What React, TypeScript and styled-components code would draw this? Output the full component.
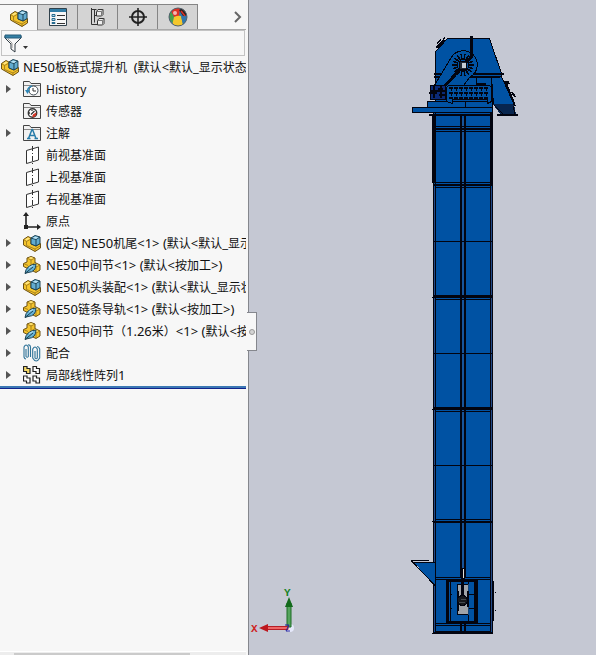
import React from "react";
import styled, { createGlobalStyle } from "styled-components";

const GlobalStyle = createGlobalStyle`
  * { box-sizing: border-box; }
  body {
    margin: 0;
    background: #c5c8d3;
    color: #111;
    font-family: "Noto Sans", "Noto Sans CJK SC", sans-serif;
    font-size: 12px;
  }
  button { font: inherit; color: inherit; padding: 0; border: 0; background: none; }
`;

const Workspace = styled.main`
  display: grid;
  grid-template-columns: 249px minmax(0, 1fr);
  min-height: 100vh;
`;

const Panel = styled.aside`
  position: relative;
  display: flex;
  flex-direction: column;
  min-width: 0;
  padding: 4px 2px 0 0;
  background: #f7f7f7;
  border-right: 1px solid #85878d;
`;

const TabBar = styled.div`
  display: flex;
  align-items: stretch;
  height: 26px;
  border-bottom: 1px solid #a9a9a9;
`;

const Tab = styled.button<{ $active?: boolean }>`
  display: flex;
  align-items: center;
  justify-content: center;
  width: ${(p) => (p.$active ? 38 : 40)}px;
  height: ${(p) => (p.$active ? 26 : 25)}px;
  background: ${(p) => (p.$active ? "#f7f7f7" : "#d4d4d4")};
  border-top: 1px solid #858585;
  border-right: 1px solid #858585;
`;

const MoreTabs = styled.button`
  display: flex;
  align-items: center;
  margin-left: auto;
  padding-right: 4px;
`;

const FilterBar = styled.div`
  display: flex;
  align-items: center;
  height: 26px;
  margin: 0 1px;
  padding-left: 2px;
  border: 1px solid #c3c3c3;
`;

const FilterButton = styled.button`
  display: flex;
  align-items: center;
`;

const FilterInput = styled.input`
  flex: 1;
  min-width: 0;
  border: 0;
  outline: 0;
  background: transparent;
  font: inherit;
`;

const RootRow = styled.div`
  display: flex;
  align-items: center;
  gap: 4px;
  height: 22px;
  padding-left: 1px;
  white-space: nowrap;
  overflow: hidden;
`;

const Tree = styled.ul`
  margin: 0;
  padding: 0;
  list-style: none;
  border-bottom: 2px solid #3c78b4;
  box-shadow: 0 1px 0 #10248c;
`;

const Row = styled.li`
  display: grid;
  grid-template-columns: 18px 18px minmax(0, 1fr);
  column-gap: 5px;
  align-items: center;
  height: 22px;
  overflow: hidden;
`;

const Expander = styled.button`
  display: flex;
  padding-left: 6px;
`;

const Label = styled.span`
  padding-top: 2px;
  overflow: hidden;
  white-space: pre;
  line-height: 20px;
`;

const Latin = styled.span`
  font-size: 13px;
  line-height: 1;
`;

const ScrollTrack = styled.div`
  height: 4px;
  margin-top: auto;
  padding: 1px 56px 0 14px;
  border-top: 1px solid #fff;
  background: #ededed;
`;

const ScrollThumb = styled.div`
  height: 2px;
  background: #cbcbcb;
`;

const Splitter = styled.button`
  position: absolute;
  z-index: 1;
  top: 312px;
  right: -9px;
  display: flex;
  align-items: center;
  justify-content: center;
  width: 10px;
  height: 39px;
  background: #f7f7f7;
  border: 1px solid #85878d;
  border-left: 0;
`;

const Grip = styled.span`
  width: 6px;
  height: 6px;
  border: 1px solid #999;
  border-radius: 50%;
  background: #d4d4d4;
`;

const Viewport = styled.section`
  position: relative;
  min-width: 0;
  background: #c5c8d3;
`;

const Model = styled.svg`
  display: block;
  width: 100%;
`;

const Triad = styled.svg`
  position: absolute;
  left: 1px;
  bottom: 15px;
`;

function AssemblyIcon() {
  return (
    <svg width="18" height="18" viewBox="0 0 18 18" aria-hidden="true">
      <path d="M.5 5.500 5 2.500l3 1.500v6l5 2 4.500-2.500V14L12 17.500.5 11z" fill="#f4c42c" stroke="#6b5014" />
      <path d="m.5 5.500 3 2v4L12 15v2.500M3.500 7.500 8 5M12 15l5-3" fill="none" stroke="#98731a" strokeWidth=".8" />
      <path d="m2 5.500 3-2 2 1-3.500 2z" fill="#ffe681" />
      <path d="m8 4 4-2.500 5 1.500v6.500L13 12l-5-2z" fill="#62acd0" stroke="#1c4254" />
      <path d="m8 4 5 1.500L17 3M13 5.500V12" fill="none" stroke="#1c4254" />
      <path d="m9.500 4 3-1.500 3 1-2.500 1.500z" fill="#b9e2f3" />
    </svg>
  );
}

function PartIcon() {
  return (
    <svg width="18" height="18" viewBox="0 0 18 18" aria-hidden="true">
      <path d="M.5 7.500 4 6V2l4-1.500L12 2v4.500l5 2.500v5l-4 2.500L.5 10.500z" fill="#f4c42c" stroke="#6b5014" />
      <path d="m4 2 4 2 4-2M8 4v5M.5 7.500 5 9.500M12 6.500 9 8.500l4 2.500 4-2M13 11v5" fill="none" stroke="#98731a" strokeWidth=".8" />
      <path d="m5.500 2 2.500-1 2.500 1L8 3zM10.500 8.500 12 7.500l3.500 1.500-2 1z" fill="#ffe681" />
      <path d="M2 17.500Q3 9 13 8q0 8-8 8.500z" fill="#69b3d5" stroke="#1c4254" />
      <path d="m2 17.500 8-6.500" stroke="#1c4254" />
      <path d="m6 11.500 4-2" stroke="#c4e6f3" />
    </svg>
  );
}

function FolderIcon({ kind }: { kind: "history" | "sensor" | "note" }) {
  return (
    <svg width="18" height="18" viewBox="0 0 18 18" aria-hidden="true">
      <path d="M.5 16.500v-15h6l1.500 2h9.500v13z" fill="#f2f2f2" stroke="#444" />
      <path d="M1 5.500h16" stroke="#888" />
      {kind === "history" && (
        <>
          <circle cx="10.500" cy="10.500" r="4.500" fill="#fff" stroke="#3f4b53" />
          <path d="M10 8v3h3" fill="none" stroke="#333" />
          <path d="M2 10h5l-2.500 4z" fill="#2e86b5" />
          <path d="M4.500 11Q5 7 9 6" fill="none" stroke="#2e86b5" strokeWidth="1.500" />
        </>
      )}
      {kind === "sensor" && (
        <>
          <circle cx="9.500" cy="11" r="4.200" fill="#fff" stroke="#333" strokeWidth="1.400" />
          <path d="M13 11a4 4 0 0 1-3 4v-2z" fill="#d63524" stroke="#d63524" />
          <path d="m8 12.500 3.500-3.500M6 11h1M9 8v1" stroke="#333" strokeWidth="1.300" />
        </>
      )}
      {kind === "note" && (
        <path d="m5.500 14.500 3.500-9h.5l3.500 9M7 11.500h5M4 14.500h3.500m4 0H15" fill="none" stroke="#277ca9" strokeWidth="1.500" />
      )}
    </svg>
  );
}

function PlaneIcon() {
  return (
    <svg width="18" height="18" viewBox="0 0 18 18" aria-hidden="true">
      <path d="M3.500 4.500 15.500 1v13l-12 3.500z" fill="#fff" stroke="#333" />
      <path d="M9.500 0v18" stroke="#333" strokeDasharray="5 2 1 2" />
    </svg>
  );
}

function OriginIcon() {
  return (
    <svg width="18" height="18" viewBox="0 0 18 18" aria-hidden="true">
      <path d="M3 14V3M3 15h13" stroke="#222" strokeWidth="1.600" />
      <path d="m0 4 3-4 3 4zM14 12l4 3-4 3z" fill="#222" />
      <rect x="1" y="13" width="4" height="4" fill="#222" />
    </svg>
  );
}

function MateIcon() {
  return (
    <svg width="18" height="18" viewBox="0 0 18 18" aria-hidden="true">
      <g fill="none" stroke="#2f7398" strokeWidth="1.100">
        <path d="M3 5v7.500q1.200 1.500 2.300 0V3Q3-1 1 3v10q.5 2 2 2M7.500 13V3Q7 .5 5 1" />
        <path d="M12 7v7q1.200 1.500 2.300 0V5q-2.300-4-4.600 0v9q3.500 6 7 0V5q-.7-2.500-2.700-2.500" />
      </g>
    </svg>
  );
}

function PatternIcon() {
  const block = "M.5.5h3.500v2h3v5H3.500v-2h-3z";
  return (
    <svg width="18" height="18" viewBox="0 0 18 18" aria-hidden="true">
      <g stroke="#222" strokeWidth="1.200" fill="#fff">
        <path d={block} fill="#f3d868" />
        <path d={block} transform="translate(9.500 0)" />
        <path d={block} transform="translate(0 9.500)" />
        <path d={block} transform="translate(9.500 9.500)" />
      </g>
    </svg>
  );
}

function PropertyIcon() {
  return (
    <svg width="18" height="18" viewBox="0 0 18 18" aria-hidden="true">
      <path d="M.5.5h17v17H.5z" fill="#f7f7f7" stroke="#30414b" />
      <path d="M1 1h16v3H1z" fill="#317da6" />
      <path d="M3 6.500h3v2H3zM3 10.500h3v2H3zM3 14.500h3v1H3z" fill="#b9dce9" stroke="#276b90" />
      <path d="M8 7.500h8M8 11.500h8M8 15.500h8" stroke="#333" />
    </svg>
  );
}

function ConfigIcon() {
  return (
    <svg width="18" height="18" viewBox="0 0 18 18" aria-hidden="true">
      <path d="M2.500 0v16.500H9M2.500 1.500h5M5.500 2v12.500M5.500 7.500H8" fill="none" stroke="#333" />
      <g fill="#eee" stroke="#333">
        <path d="m7.500 3.500 1.500-2h5v5l-1.500 1.500h-5zM8.500 12.500l1.500-2h5v5L13.500 17h-5z" />
        <path d="M7.500 3.500h5V8m0-4.500 1.500-2M8.500 12.500h5V17m0-4.500 1.500-2" fill="none" stroke="#777" />
      </g>
    </svg>
  );
}

function TargetIcon() {
  return (
    <svg width="18" height="18" viewBox="0 0 18 18" aria-hidden="true">
      <circle cx="9" cy="9" r="6" fill="none" stroke="#222" strokeWidth="2" />
      <path d="M9 0v18M0 9h18" stroke="#222" strokeWidth="1.600" />
    </svg>
  );
}

function AppearanceIcon() {
  return (
    <svg width="20" height="20" viewBox="0 0 20 20" aria-hidden="true">
      <circle cx="10" cy="10" r="9" fill="#3178ad" />
      <path d="M3 4.500Q7 0 12 1.200L11 9 6 10z" fill="#df3124" />
      <path d="M1.200 9Q1.500 6 3 4.500L6 10l-1 6Q1 13 1.200 9z" fill="#48a04b" />
      <path d="M6 10q4-2 7-1l2 8.500Q9 21 4.500 16.500z" fill="#f4c72d" />
      <path d="M13 9l5-1.500q2 6-3 10z" fill="#3178ad" />
      <path d="m11 3 3-1.500q4 2 4.500 7L15 9z" fill="#2c2220" />
      <path d="m13 4 4 5" stroke="#df3124" strokeWidth="1.500" />
      <circle cx="7" cy="6" r="2" fill="#fff" opacity=".65" />
      <circle cx="10" cy="10" r="9" fill="none" stroke="#53616b" />
    </svg>
  );
}

function FunnelIcon() {
  return (
    <svg width="26" height="20" viewBox="0 0 26 20" aria-hidden="true">
      <path d="M1 3h16v2l-6 6v8l-4-3v-5L1 5z" fill="#f8f8f8" stroke="#303b42" />
      <path d="M1 2h16v3H1z" fill="#3480a5" stroke="#245a78" />
      <path d="m4 6 4 4v5" fill="none" stroke="#999" />
      <path d="M19 13h5l-2.500 3z" fill="#333" />
    </svg>
  );
}

const icons = {
  assembly: <AssemblyIcon />,
  part: <PartIcon />,
  history: <FolderIcon kind="history" />,
  sensor: <FolderIcon kind="sensor" />,
  note: <FolderIcon kind="note" />,
  plane: <PlaneIcon />,
  origin: <OriginIcon />,
  mate: <MateIcon />,
  pattern: <PatternIcon />,
};

type Feature = { text: string; icon: keyof typeof icons; expands?: boolean };

const features: Feature[] = [
  { text: "History", icon: "history", expands: true },
  { text: "传感器", icon: "sensor" },
  { text: "注解", icon: "note", expands: true },
  { text: "前视基准面", icon: "plane" },
  { text: "上视基准面", icon: "plane" },
  { text: "右视基准面", icon: "plane" },
  { text: "原点", icon: "origin" },
  { text: "(固定) NE50机尾<1> (默认<默认_显示", icon: "assembly", expands: true },
  { text: "NE50中间节<1> (默认<按加工>)", icon: "part", expands: true },
  { text: "NE50机头装配<1> (默认<默认_显示状", icon: "assembly", expands: true },
  { text: "NE50链条导轨<1> (默认<按加工>)", icon: "part", expands: true },
  { text: "NE50中间节（1.26米）<1> (默认<按", icon: "part", expands: true },
  { text: "配合", icon: "mate", expands: true },
  { text: "局部线性阵列1", icon: "pattern", expands: true },
];

/* Latin runs are set one size larger than the Chinese characters beside them. */
function MixedText({ text }: { text: string }) {
  const runs = text.match(/[\x20-\x7e]+|[^\x20-\x7e]+/g) ?? [];
  return (
    <Label>
      {runs.map((run, i) =>
        /^[\x20-\x7e]/.test(run) && runs.length > 1 ? <Latin key={i}>{run}</Latin> : run
      )}
    </Label>
  );
}

function Elevator() {
  const spokes = Array.from({ length: 18 }, (_, i) => {
    const a = (i * Math.PI) / 9;
    return `M${463 + 5 * Math.cos(a)} ${65 + 5 * Math.sin(a)}L${463 + 11 * Math.cos(a)} ${65 + 11 * Math.sin(a)}`;
  }).join("");
  const blue = "#0052a3";
  const ink = "#02040f";
  return (
    <Model viewBox="249 0 347 655" role="img" aria-label="NE50板链式提升机">
      <g shapeRendering="crispEdges" stroke={ink} fill={blue}>
        {/* casing */}
        <path d="M433.500 112.500h59v520h-59z" />
        <path d="M435.500 112v520M490.500 112v520" fill="none" />
        <path d="M434.500 188v443M491.500 188v443" stroke="#234b8a" fill="none" />
        <path d="M433.500 114v69M491.500 112v74" strokeWidth="3" fill="none" />
        <path d="M461 114v464M465 114v464M461 624v9M465 624v9" strokeWidth="2" fill="none" />
        <path d="M463 118v450" stroke="#17549a" strokeWidth="2" />
        <path d="M435 126.500h56M435 131.500h56M435 182.500h56M435 187.500h56M435 299.500h56M435 411.500h56M435 519.500h56" />
        <path d="M434 129h58M433 185h59M433 296h59M433 408h59M433 522h59" strokeWidth="2" />
        <path d="M433 241.500h60M433 353.500h60M433 465.500h60" />
        <path d="M432 297.500h61M432 409.500h61M432 521.500h61" />
        <path d="M429 114.500h64M458 115h10" strokeWidth="2" />

        {/* head hood and discharge spout */}
        <path d="M435.500 51.500 447.500 38.500h42l12 35v3h-10l1 27h-57z" />
        <path d="M491.500 76.500h10l13 29-1 1-20-2z" />
        <path d="M493 104h21l2 10h-16z" fill="#08264f" stroke="none" />
        <path d="m494 105 9 9h12l-2-8" fill="none" />
        <path d="M497 114.500h21" strokeWidth="2" />
        <path d="M434 73.500h70M434 76.500h66" strokeWidth="2" />
        <path d="M436 48l8-8M437 43l4-3M443 39l2-1" strokeWidth="1.500" />
        <path d="m505 81 5 12 5 13M509 84l-2-3M512 92l3 5" strokeWidth="2" />
        <path d="M491 77v27M476.500 76v10" />
        <path d="M477 84h9" strokeWidth="2" />

        {/* drive */}
        <path d="M434.500 85.500 451 58a14 14 0 1 1 19 19l-7 9z" stroke="none" />
        <path d="M434.500 85.500 451 58a14 14 0 1 1 19 19l-7 9" fill="none" />
        <path d="m444 87 19-21 8-9" strokeWidth="3" />
        <path d="M471.500 36v22" strokeWidth="3" />
        <path d={spokes} strokeWidth="1.500" fill="none" />
        <path d="M459 61h7v8h-7z" fill="#202936" />
        <path d="M462 63h4v5h-4z" fill="#c5ccd4" stroke="none" />
        <path d="M430.500 85.500h15v14h-15z" fill="#0b2a77" />
        <path d="M434 86v12M441 86v12M430 91h16M429 93h8M438 89h5M439 95h7" strokeWidth="2" />
        <path d="M427.500 101.500h65v6h-65z" />
        <path d="M446.500 88.500q0-3 3-3h38q4 0 4 3v13l-4 2v-4h-35v4l-6-2z" />
        <path d="M449 88h39M449 93h39M449 98h39" strokeWidth="2" strokeDasharray="4 1" />
        <path d="M451 88v10M456 88v10M461 88v10M466 88v10M471 88v10M476 88v10M481 88v10M486 88v10" strokeDasharray="3 2" />
        <path d="M412.500 107.500h80v5h-80z" />
        <path d="M465 102v5" />

        {/* tail and inspection door */}
        <path d="M414 562.500h21v23z" stroke="none" />
        <path d="M411 560.500h18M414 562.500h21M411 560.500l24 25" fill="none" />
        <path d="M435 577.500h56M435 579.500h56M435 623.500h56M435 625.500h56M435 631.500h56" />
        <path d="M447.500 580h29v42h-29z" strokeWidth="3" />
        <path d="M450.500 580v42M468.500 580v42M474.500 580v42" />
        <path d="M450 594h2M450 608h2M474 594h-6M474 608h-6" />
        <path d="M457.500 584.500h11v30h-11z" fill="#a0a4a9" />
        <path d="M468.500 584v31" stroke="#164678" />
        <path d="M457.500 591v20M467.500 591v16" strokeWidth="2" />
        <path d="M462 568h2v10h-2z" fill="#e0ddd5" />
        <path d="M462.500 578v17" strokeWidth="3" />
        <circle cx="462.500" cy="600.500" r="5" fill="#17191d" />
        <path d="M459 602h6M461 599h5" stroke="#454b50" />
        <path d="M493 581v40" strokeWidth="2" />
        <path d="M495 592.500h1M495 610.500h1M432 633.500h61" />
      </g>
    </Model>
  );
}

export default function App() {
  return (
    <>
      <GlobalStyle />
      <Workspace>
        <Panel>
          <TabBar>
            <Tab $active aria-label="特征树"><AssemblyIcon /></Tab>
            <Tab aria-label="属性"><PropertyIcon /></Tab>
            <Tab aria-label="配置"><ConfigIcon /></Tab>
            <Tab aria-label="尺寸"><TargetIcon /></Tab>
            <Tab aria-label="外观"><AppearanceIcon /></Tab>
            <MoreTabs aria-label="更多">
              <svg width="8" height="12" viewBox="0 0 8 12" aria-hidden="true">
                <path d="m1 1 5 5-5 5" fill="none" stroke="#666" strokeWidth="2" />
              </svg>
            </MoreTabs>
          </TabBar>
          <FilterBar>
            <FilterButton aria-label="过滤器"><FunnelIcon /></FilterButton>
            <FilterInput aria-label="过滤" />
          </FilterBar>
          <RootRow>
            <AssemblyIcon />
            <MixedText text="NE50板链式提升机  (默认<默认_显示状态" />
          </RootRow>
          <Tree>
            {features.map((f) => (
              <Row key={f.text}>
                {f.expands ? (
                  <Expander aria-label={`展开 ${f.text}`}>
                    <svg width="5" height="8" viewBox="0 0 5 8" aria-hidden="true">
                      <path d="m0 0 5 4-5 4z" fill="#555" />
                    </svg>
                  </Expander>
                ) : (
                  <span />
                )}
                {icons[f.icon]}
                <MixedText text={f.text} />
              </Row>
            ))}
          </Tree>
          <ScrollTrack><ScrollThumb /></ScrollTrack>
          <Splitter aria-label="折叠面板"><Grip /></Splitter>
        </Panel>
        <Viewport>
          <Elevator />
          <Triad width="50" height="56" viewBox="250 584 50 56" role="img" aria-label="坐标轴">
            <circle cx="290" cy="628" r="4" fill="#e5e8fa" />
            <path d="M287 603h4v24h-4z" fill="#55a45d" stroke="#1d6c25" />
            <path d="m289 597 4 10h-8z" fill="#126a1b" />
            <path d="M266 626.500h22v3h-22z" fill="#ee6666" stroke="#b51e27" />
            <path d="m259 628 9-4v8z" fill="#bd171e" />
            <path d="M285 625h4l-3 6h4" fill="none" stroke="#2020a0" />
            <text x="251" y="632" fill="#cf2222" fontFamily="Liberation Mono" fontWeight="bold" fontSize="11">X</text>
            <text x="284" y="596" fill="#168226" fontFamily="Liberation Mono" fontWeight="bold" fontSize="11">Y</text>
          </Triad>
        </Viewport>
      </Workspace>
    </>
  );
}
